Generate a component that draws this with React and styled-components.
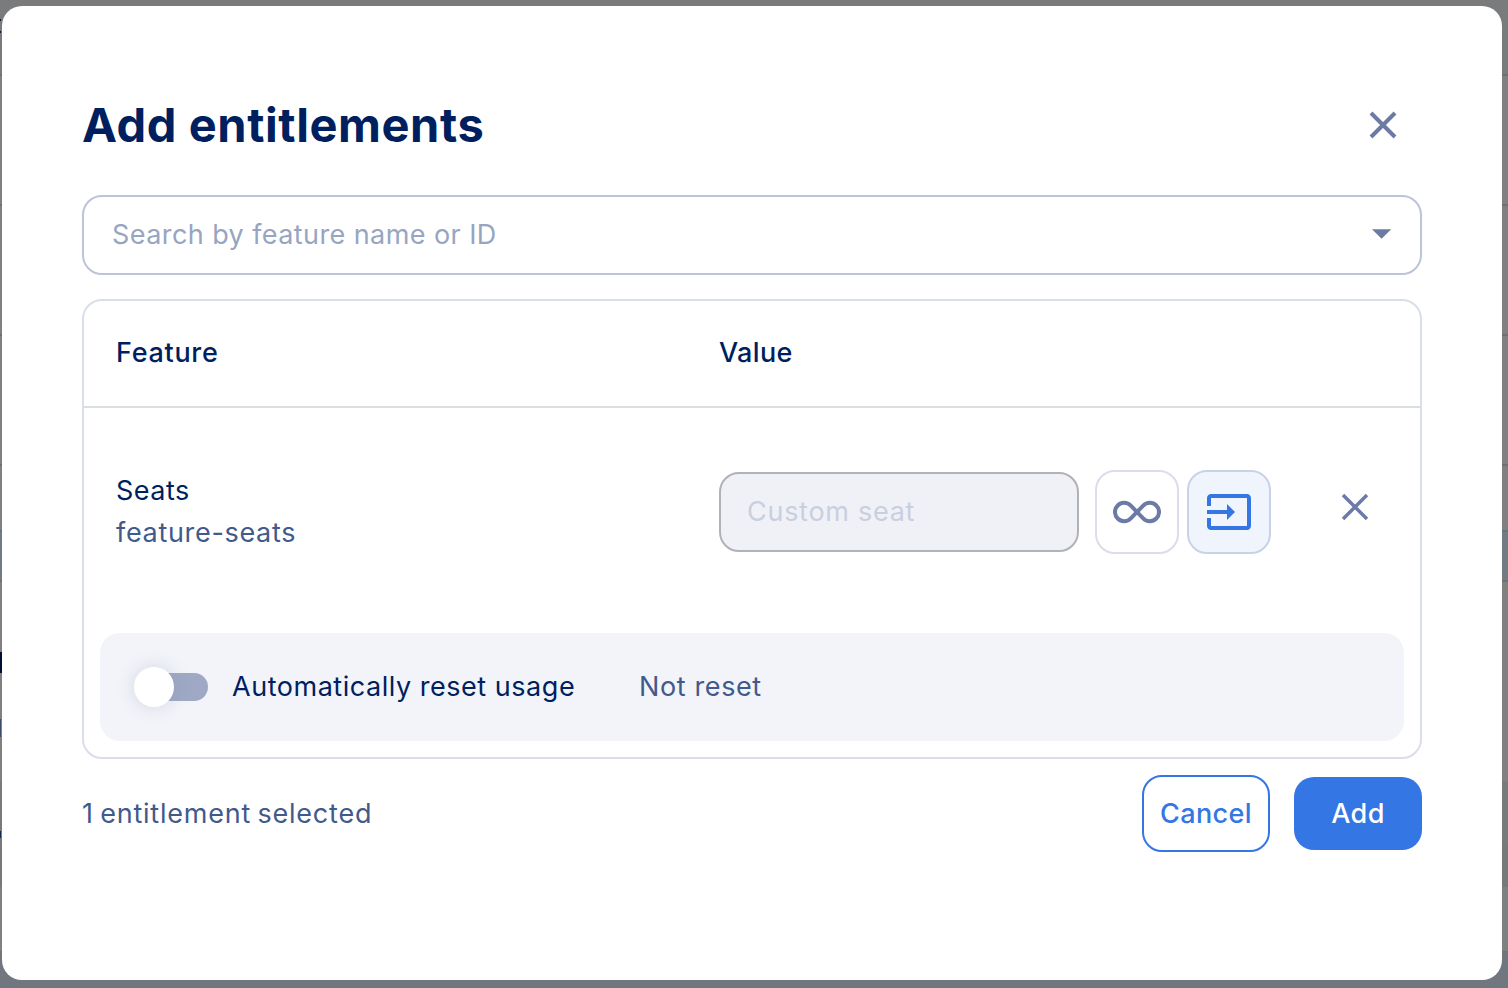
import React from 'react';
import styled, { createGlobalStyle } from 'styled-components';

const color = {
  navy: '#001f5f',
  slate: '#425a8b',
  icon: '#6b7ba6',
  blue: '#3376e4',
  line: '#dadeea',
};

const GlobalStyle = createGlobalStyle`
  *, *::before, *::after { box-sizing: border-box; }
  body {
    margin: 0;
    overflow: hidden;
    font-family: Inter, 'Liberation Sans', sans-serif;
    font-size: 27px;
    color: ${color.navy};
  }
  button, input { font: inherit; }
`;

const Screen = styled.div`
  display: grid;
  grid-template: 988px / 1508px;
  > * { grid-area: 1 / 1; }
`;

const Backdrop = styled.div`
  display: flex;
  flex-direction: column;
`;

const Band = styled.div`
  height: ${(p) => p.$h}px;
  background: ${(p) => p.$tone};
`;

const EdgeContent = styled.div`
  display: flex;
  flex-direction: column;
  width: 2px;
`;

const EdgeMark = styled.span`
  width: ${(p) => p.$w}px;
  height: ${(p) => p.$h}px;
  margin-top: ${(p) => p.$gap}px;
  background: ${(p) => p.$tone};
`;

const Dialog = styled.section`
  display: flex;
  flex-direction: column;
  width: 1500px;
  height: 974px;
  margin: 6px 0 0 2px;
  padding: 84px 80px 0;
  border-radius: 20px;
  background: #fff;
`;

const Header = styled.header`
  display: flex;
  align-items: center;
  justify-content: space-between;
  height: 69px;
  padding-right: 15px;
`;

const Title = styled.h1`
  margin: 0;
  font-size: 47px;
  line-height: 70px;
  font-weight: 700;
  letter-spacing: 0.58px;
`;

const IconButton = styled.button`
  display: grid;
  place-items: center;
  width: 48px;
  height: 48px;
  padding: 0;
  border: 0;
  background: none;
  color: ${color.icon};
`;

const Label = styled.span`
  line-height: 42px;
  white-space: nowrap;
  letter-spacing: ${(p) => p.$track ?? 0.5}px;
  word-spacing: ${(p) => p.$gap ?? 0}px;
  font-weight: ${(p) => p.$weight ?? 400};
  color: ${(p) => p.$tone ?? color.navy};
`;

const Search = styled.div`
  display: flex;
  align-items: center;
  justify-content: space-between;
  height: 80px;
  margin-top: 36px;
  padding: 0 14px 0 28px;
  border: 2px solid #bbc4d9;
  border-radius: 20px;
  color: ${color.icon};
`;

const Table = styled.div`
  height: 460px;
  margin-top: 24px;
  border: 2px solid ${color.line};
  border-radius: 20px;
`;

const TableHead = styled.div`
  display: grid;
  grid-template-columns: 603px 1fr;
  align-items: center;
  height: 107px;
  padding: 0 32px 1px;
  border-bottom: 2px solid #dcdde0;
`;

const TableRow = styled.div`
  display: grid;
  grid-template-columns: 603px 360px 84px 84px 1fr;
  align-items: center;
  height: 208px;
  padding: 0 41px 0 32px;
`;

const FeatureCell = styled.div`
  display: flex;
  flex-direction: column;
`;

const ValueInput = styled.input`
  width: 360px;
  height: 80px;
  padding: 0 26px 2px;
  border: 2px solid #b1b2b8;
  border-radius: 20px;
  background: #f0f1f6;
  letter-spacing: 0.72px;
  &::placeholder { color: #c9cfe0; opacity: 1; }
`;

const ModeButton = styled.button`
  display: grid;
  place-items: center;
  width: 84px;
  height: 84px;
  margin-left: ${(p) => (p.$active ? 24 : 16)}px;
  padding: 0;
  border: 2px solid ${(p) => (p.$active ? '#c9d3e6' : color.line)};
  border-radius: 20px;
  background: ${(p) => (p.$active ? '#eff4fd' : '#fff')};
  color: ${(p) => (p.$active ? color.blue : color.icon)};
`;

const RemoveCell = styled.div`
  display: flex;
  justify-content: flex-end;
  padding-bottom: 10px;
`;

const ResetPanel = styled.div`
  display: flex;
  align-items: center;
  height: 108px;
  margin: 17px 16px 0;
  padding-left: 34px;
  border-radius: 20px;
  background: #f3f4f9;
`;

const Switch = styled.span`
  display: flex;
  align-items: center;
  width: 68px;
  height: 28px;
  margin: 0 24px 0 6px;
  border-radius: 14px;
  background: #9fa9c5;
`;

const Thumb = styled.span`
  flex: none;
  width: 40px;
  height: 40px;
  margin-left: -6px;
  border-radius: 50%;
  background: #fff;
  box-shadow: 0 0 18px rgba(100, 125, 165, 0.24);
`;

const ResetValue = styled.div`
  display: flex;
  margin-left: auto;
  width: 765px;
`;

const Footer = styled.footer`
  display: flex;
  align-items: center;
  height: 77px;
  margin-top: 16px;
`;

const Actions = styled.div`
  display: flex;
  align-items: center;
  gap: 24px;
  margin-left: auto;
`;

const ActionButton = styled.button`
  width: 128px;
  height: ${(p) => (p.$primary ? 73 : 77)}px;
  padding: 0;
  border: ${(p) => (p.$primary ? '0' : `2px solid ${color.blue}`)};
  border-radius: 20px;
  background: ${(p) => (p.$primary ? color.blue : '#fff')};
  color: ${(p) => (p.$primary ? '#fff' : color.blue)};
  font-weight: 500;
  letter-spacing: 0.4px;
`;

const CloseIcon = ({ weight }) => (
  <svg width="28" height="28" viewBox="0 0 28 28" fill="none" stroke="currentColor" strokeWidth={weight}>
    <path d="M2 2L26 26M26 2L2 26" />
  </svg>
);

const CaretIcon = () => (
  <svg width="48" height="48" viewBox="0 0 48 48" fill="currentColor">
    <path d="M14 18.2h19.2L23.6 27.8z" />
  </svg>
);

const InfinityIcon = () => (
  <svg width="48" height="48" viewBox="0 0 48 48" fill="none" stroke="currentColor" strokeWidth="4">
    <path d="M17.8 17.6A9.2 9.2 0 1 0 17.8 30.4L30.2 17.6A9.2 9.2 0 1 1 30.2 30.4Z" />
  </svg>
);

const InputIcon = () => (
  <svg width="48" height="48" viewBox="0 0 24 24" fill="currentColor">
    <path d="M21 3.01H3c-1.1 0-2 .9-2 2V9h2V4.99h18v14.03H3V15H1v4.01c0 1.1.9 1.98 2 1.98h18c1.1 0 2-.88 2-1.98v-14c0-1.11-.9-2-2-2zM11 16l4-4-4-4v3H1v2h10v3z" />
  </svg>
);

const bands = [
  [74, '#7a7b7d'], [2, '#6e6f71'], [128, '#808080'], [2, '#707071'],
  [128, '#808080'], [2, '#707071'], [128, '#808080'], [2, '#707071'],
  [64, '#808080'], [2, '#707174'], [48, '#727a84'], [2, '#707174'],
  [199, '#808080'], [65, '#797b7b'], [41, '#777979'], [64, '#7f8080'],
  [2, '#717376'], [35, '#70777f'],
];

const marks = [
  [19, 1, 2, '#0c1a3c'], [10, 1, 2, '#0c1a3c'], [619, 2, 21, '#020f35'],
  [46, 1, 18, '#3c4a6c'], [94, 1, 7, '#17264c'],
];

export default function App() {
  return (
    <>
      <GlobalStyle />
      <Screen>
        <Backdrop>
          {bands.map(([h, tone], i) => <Band key={i} $h={h} $tone={tone} />)}
        </Backdrop>
        <EdgeContent>
          {marks.map(([gap, w, h, tone], i) => <EdgeMark key={i} $gap={gap} $w={w} $h={h} $tone={tone} />)}
        </EdgeContent>
        <Dialog role="dialog">
          <Header>
            <Title>Add entitlements</Title>
            <IconButton aria-label="Close"><CloseIcon weight={4} /></IconButton>
          </Header>
          <Search>
            <Label $track={0.42} $tone="#98a5c1">Search by feature name or ID</Label>
            <CaretIcon />
          </Search>
          <Table>
            <TableHead>
              <Label $weight={500} $track={0.7}>Feature</Label>
              <Label $weight={500} $track={0.35}>Value</Label>
            </TableHead>
            <TableRow>
              <FeatureCell>
                <Label $track={0.5}>Seats</Label>
                <Label $track={0.68} $tone={color.slate}>feature-seats</Label>
              </FeatureCell>
              <ValueInput placeholder="Custom seat" disabled />
              <ModeButton aria-label="Unlimited"><InfinityIcon /></ModeButton>
              <ModeButton aria-label="Custom" $active><InputIcon /></ModeButton>
              <RemoveCell>
                <IconButton aria-label="Remove"><CloseIcon weight={3.5} /></IconButton>
              </RemoveCell>
            </TableRow>
            <ResetPanel>
              <Switch><Thumb /></Switch>
              <Label $track={0.53}>Automatically reset usage</Label>
              <ResetValue><Label $track={0.62} $tone={color.slate}>Not reset</Label></ResetValue>
            </ResetPanel>
          </Table>
          <Footer>
            <Label $track={0.78} $gap={-2} $tone={color.slate}>1 entitlement selected</Label>
            <Actions>
              <ActionButton>Cancel</ActionButton>
              <ActionButton $primary>Add</ActionButton>
            </Actions>
          </Footer>
        </Dialog>
      </Screen>
    </>
  );
}
